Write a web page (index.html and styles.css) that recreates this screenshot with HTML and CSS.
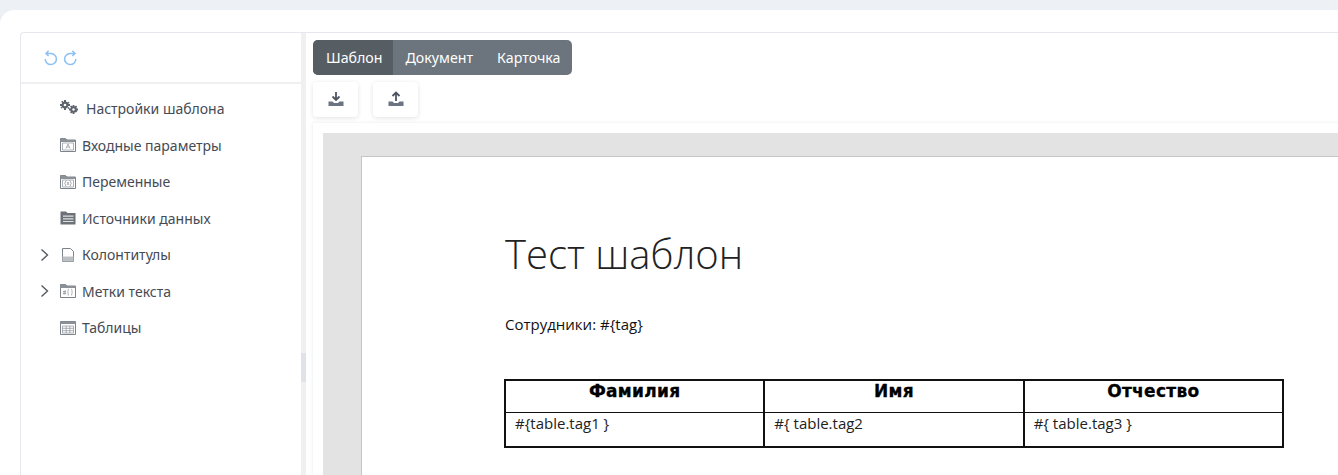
FILE: index.html
```html
<!DOCTYPE html>
<html lang="ru">
<head>
<meta charset="utf-8">
<title>Шаблон</title>
<link rel="stylesheet" href="styles.css">
</head>
<body>
<main class="card">
  <div class="panel">
    <aside class="sidebar">
      <div class="history">
        <svg class="hist-icon" viewBox="0 0 14 16"><path d="M4.600 .8 2 3.400l2.600 2.600M2.200 3.400H7a5.600 5.600 0 1 1-5.800 5.600"/></svg>
        <svg class="hist-icon" viewBox="0 0 14 16"><path d="M9.400 .8 12 3.400 9.400 6M11.800 3.400H7a5.600 5.600 0 1 0 5.800 5.600"/></svg>
      </div>
      <nav class="tree">
        <div class="row row-first">
          <svg class="gears" viewBox="0 0 20 15"><g class="gear-fill"><circle cx="6" cy="5" r="3.400"/><path d="M5 0h2v2H5zM5 8h2v2H5zM1 4h2v2H1zM9 4h2v2H9zM2.200 1.400l1.400-.6.800 1.400-1.400.8zM8.400 7.800l1.400-.8.800 1.200-1.400.8zM2.200 8.600l-.6-1.200 1.400-.8.800 1.200zM9.800 1.800l.8 1.200-1.400.8-.8-1.200z"/><circle cx="14.500" cy="9.500" r="3.200"/><path d="M13.600 5h1.800v2h-1.800zM13.600 12h1.800v2h-1.800zM10 8.600h2v1.800h-2zM17 8.600h2v1.800h-2zM11 6.600l1.200-1.200 1.200 1.200-1.200 1.200zM15.800 11.400l1.200-1.200 1.200 1.200-1.200 1.200zM11 12.200l1.200-1.200 1.200 1.200-1.200 1.200zM15.800 6.800l1.200-1.200 1.200 1.200-1.200 1.200z"/></g><circle class="gear-hole" cx="6" cy="5" r="1.300"/><circle class="gear-hole" cx="14.500" cy="9.500" r="1.200"/></svg>
          <span>Настройки шаблона</span>
        </div>
        <div class="row">
          <svg class="tree-icon" viewBox="0 0 16 14"><path class="i-line" d="M.5 13.500V.5h5L7 2h8.500v11.500z"/><path class="i-top" d="M.5.5h5L7 2h8.500v2H.5z"/><path class="i-thin" d="M2.500 5h11v7h-11zM6 10.500l2-4.500 2 4.500M6.800 9h2.400"/></svg>
          <span>Входные параметры</span>
        </div>
        <div class="row">
          <svg class="tree-icon" viewBox="0 0 16 14"><path class="i-line" d="M.5 13.500V.5h5L7 2h8.500v11.500z"/><path class="i-top" d="M.5.5h5L7 2h8.500v2H.5z"/><path class="i-thin" d="M2.500 5h11v7h-11zM6.500 5.500c-1.500 0-.5 2.800-2 2.800 1.500 0 .5 3.200 2 3.200M9.500 5.500c1.500 0 .5 2.800 2 2.800-1.500 0-.5 3.200-2 3.200M7 7l2 3M9 7l-2 3"/></svg>
          <span>Переменные</span>
        </div>
        <div class="row">
          <svg class="tree-icon" viewBox="0 0 16 14"><path class="i-dark" d="M.5.5h5.500L7.500 2h8v11.500H.5z"/><path class="i-light" d="M3 4.500h10.500v1.200H3zM3 7.200h10.500v1.200H3zM3 9.900h10.500v1.200H3z"/></svg>
          <span>Источники данных</span>
        </div>
        <div class="row">
          <svg class="chevron" viewBox="0 0 10 14"><path d="M2 1.500 8 7l-6 5.500"/></svg>
          <svg class="tree-icon" viewBox="0 0 16 14"><path class="i-line" d="M2.500.5h8l3 3v10h-11z"/><path class="i-mid" d="M2.500 8.500h11v5h-11z"/></svg>
          <span>Колонтитулы</span>
        </div>
        <div class="row">
          <svg class="chevron" viewBox="0 0 10 14"><path d="M2 1.500 8 7l-6 5.500"/></svg>
          <svg class="tree-icon" viewBox="0 0 16 14"><path class="i-line" d="M.5 13.500V.5h5L7 2h8.500v11.500z"/><path class="i-top" d="M.5.5h5L7 2h8.500v2H.5z"/><path class="i-thin" d="M3 7.500h3M3 9.500h3M4.200 6.500l-.4 4M5.400 6.500l-.4 4M9 5c-1.500 0-.5 3-1.500 3 1 0 0 3.500 1.500 3.500M11 5c1.500 0 .5 3 1.500 3-1 0 0 3.500-1.500 3.500"/></svg>
          <span>Метки текста</span>
        </div>
        <div class="row">
          <svg class="tree-icon" viewBox="0 0 16 14"><path class="i-line" d="M.5 13.500V.5h15v13z"/><path class="i-top" d="M.5.5h15v2.500H.5z"/><path class="i-thin" d="M2.500 5h11v7h-11zM2.500 7.300h11M2.500 9.700h11M6.200 5v7M9.800 5v7"/></svg>
          <span>Таблицы</span>
        </div>
      </nav>
    </aside>
    <div class="splitter"><div class="handle"></div></div>
    <section class="content">
      <div class="tabs">
        <button class="tab tab-active">Шаблон</button>
        <button class="tab tab-middle">Документ</button>
        <button class="tab">Карточка</button>
      </div>
      <div class="tools">
        <button class="tool">
          <svg class="tool-icon" viewBox="0 0 18 16"><path class="arrow" d="M9 1v7.500M5.500 5.500 9 9l3.500-3.500"/><path class="tray" d="M1.500 10.500h4l1.500 1.500h4l1.500-1.500h4V15h-15z"/></svg>
        </button>
        <button class="tool">
          <svg class="tool-icon" viewBox="0 0 18 16"><path class="arrow" d="M9 10V1.500M5.500 5 9 1.500 12.500 5"/><path class="tray" d="M1.500 10.500h4l1.500 1.500h4l1.500-1.500h4V15h-15z"/></svg>
        </button>
      </div>
      <div class="viewer">
        <div class="desk">
          <article class="sheet">
            <h1 class="doc-title">Тест шаблон</h1>
            <p class="doc-text">Сотрудники: #{tag}</p>
            <table class="doc-table">
              <thead>
                <tr><th>Фамилия</th><th>Имя</th><th>Отчество</th></tr>
              </thead>
              <tbody>
                <tr><td>#{table.tag1 }</td><td>#{ table.tag2</td><td>#{ table.tag3 }</td></tr>
              </tbody>
            </table>
          </article>
        </div>
      </div>
    </section>
  </div>
</main>
</body>
</html>
```
FILE: styles.css
```css
* { box-sizing: border-box; }
body {
  margin: 0;
  height: 475px;
  overflow: hidden;
  padding-top: 10px;
  background: #edf0f5;
  font-family: "Noto Sans", "Open Sans", sans-serif;
  color: #3f4650;
}
.card {
  height: 465px;
  padding: 22px 0 0 20px;
  background: #fff;
  border-top-left-radius: 14px;
  box-shadow: 0 0 1px #e3e6ec;
}
.panel {
  display: flex;
  height: 443px;
  border-top: 1px solid #e6e8ed;
  border-left: 1px solid #e6e8ed;
  border-top-left-radius: 4px;
}
.sidebar { width: 280px; flex: none; }
.history {
  display: flex;
  gap: 5px;
  height: 51px;
  padding: 17px 0 0 23px;
  border-bottom: 2px solid #eef0f2;
}
.hist-icon {
  width: 14px;
  height: 16px;
  fill: none;
  stroke: #8cc1f7;
  stroke-width: 1.500;
}
.tree { display: flex; flex-direction: column; }
.row {
  display: flex;
  align-items: center;
  height: 36.500px;
  padding-left: 38px;
  font-size: 14px;
  color: #454b54;
  position: relative;
}
.row-first { height: 37px; margin-top: 6px; }
.row span { margin-left: 5px; }
.row-first span { margin-left: 7px; }
.gears { width: 20px; height: 15px; margin-top: -3px; }
.gear-fill { fill: #5d636c; }
.gear-hole { fill: #fff; }
.tree-icon { width: 18px; height: 14px; flex: none; padding: 0 1px; }
.i-line { fill: #fff; stroke: #7d838b; stroke-width: 1; }
.i-thin { fill: none; stroke: #8a9098; stroke-width: .700; }
.i-top { fill: #8c9198; }
.i-dark { fill: #6d7279; }
.i-light { fill: #dfe1e4; }
.i-mid { fill: #bcc0c5; }
.chevron {
  position: absolute;
  left: 18px;
  width: 11px;
  height: 14px;
  fill: none;
  stroke: #555b63;
  stroke-width: 1.400;
}
.splitter {
  width: 5px;
  flex: none;
  background: #f0f0f0;
  padding-top: 320px;
}
.handle { height: 29px; background: #dfe3e8; }
.content {
  flex: 1;
  min-width: 0;
  padding: 7px 0 0 7px;
}
.tabs {
  display: inline-flex;
  height: 35px;
  border-radius: 5px;
  overflow: hidden;
  background: #6c757d;
  vertical-align: top;
}
.tab {
  border: 0;
  padding: 0 12px;
  background: transparent;
  color: #fff;
  font: 14.200px "Noto Sans", "Open Sans", sans-serif;
}
.tab-active { background: #565e64; padding: 0 10px 0 13px; }
.tab-middle { padding: 0 12px 0 13px; }
.tools { display: flex; gap: 15px; margin-top: 7px; }
.tool {
  width: 45px;
  height: 35px;
  border: 0;
  padding: 0;
  background: #fff;
  border-radius: 4px;
  box-shadow: 0 1px 4px rgba(40, 50, 70, .14);
  display: flex;
  align-items: center;
  justify-content: center;
}
.tool-icon { width: 18px; height: 16px; margin-top: -1px; }
.arrow { fill: none; stroke: #4e5560; stroke-width: 1.800; }
.tray { fill: #6b7480; }
.viewer {
  height: 352px;
  margin-top: 6px;
  padding: 10px 0 0 10px;
  background: #fff;
  box-shadow: 0 0 3px rgba(40, 50, 70, .12);
  overflow: hidden;
}
.desk {
  height: 342px;
  padding: 23px 0 0 38px;
  background: #e3e3e3;
}
.sheet {
  height: 319px;
  background: #fff;
  border-left: 1px solid #c6c6c6;
  border-top: 1px solid #c6c6c6;
  padding: 75px 54px 0 142px;
  color: #111;
  font-family: "Open Sans", "Noto Sans", sans-serif;
}
.doc-title {
  margin: 0 0 0 1px;
  font-size: 40px;
  font-weight: 300;
  line-height: 44px;
  color: #222;
}
.doc-text {
  margin: 38px 0 0 1px;
  font-size: 15px;
  line-height: 20px;
}
.doc-table {
  width: 780px;
  margin-top: 45px;
  border-collapse: collapse;
  table-layout: fixed;
  border: 2px solid #111;
}
.doc-table th, .doc-table td {
  border: 1px solid #111;
  border-left-width: 2px;
  vertical-align: top;
  padding: 0;
}
.doc-table th {
  height: 32px;
  font: bold 17px/21px "DejaVu Sans", sans-serif;
  letter-spacing: .3px;
  -webkit-text-stroke: .3px #000;
  color: #000;
  text-align: center;
}
.doc-table td {
  height: 35px;
  font-size: 15px;
  line-height: 20px;
  padding-left: 9px;
  color: #222;
}
```
